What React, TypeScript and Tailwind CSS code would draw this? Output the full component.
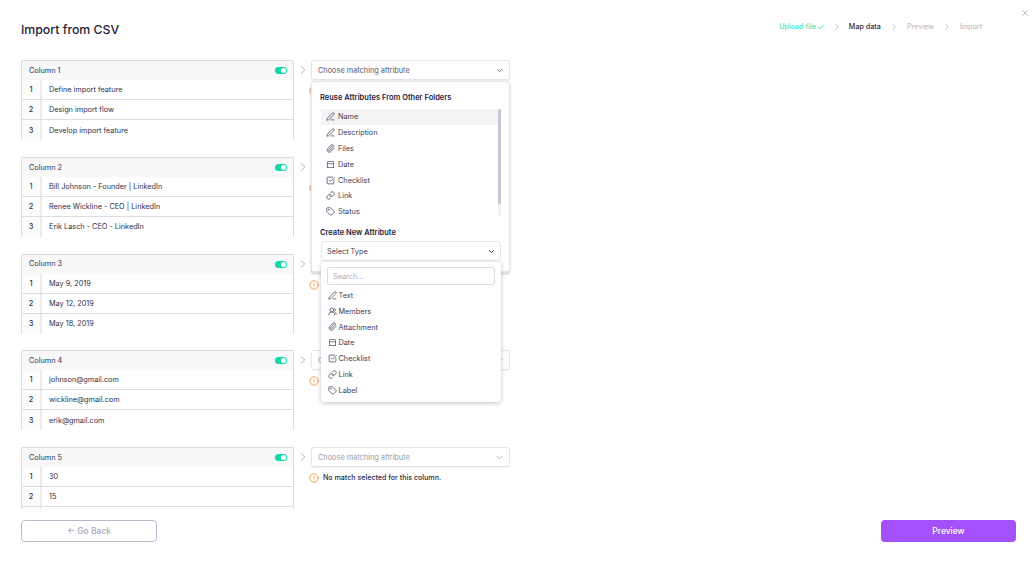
import { Check, ChevronDown, ChevronRight, CircleAlert, Link, Paperclip, PenLine, SquareCheckBig, Tag, UsersRound, X } from "lucide-react";

const columns = [
  { name: "Column 1", rows: ["Define import feature", "Design import flow", "Develop import feature"] },
  { name: "Column 2", rows: ["Bill Johnson - Founder | LinkedIn", "Renee Wickline - CEO | LinkedIn", "Erik Lasch - CEO - LinkedIn"] },
  { name: "Column 3", rows: ["May 9, 2019", "May 12, 2019", "May 18, 2019"] },
  { name: "Column 4", rows: ["johnson@gmail.com", "wickline@gmail.com", "erik@gmail.com"] },
  { name: "Column 5", rows: ["30", "15", ""] },
];

function DateIcon({ size, className }: { size: number; strokeWidth?: number; className?: string }) {
  return (
    <svg width={size} height={size} viewBox="0 0 24 24" fill="none" stroke="currentColor" strokeWidth="1.800" strokeLinecap="round" className={className}>
      <path d="M4 20V5.500A1.500 1.500 0 0 1 5.500 4h13A1.500 1.500 0 0 1 20 5.500V20" />
      <path d="M4 10h16" />
      <path d="M4 20h16" />
    </svg>
  );
}

const reuseItems = [
  { label: "Name", icon: PenLine },
  { label: "Description", icon: PenLine },
  { label: "Files", icon: Paperclip },
  { label: "Date", icon: DateIcon },
  { label: "Checklist", icon: SquareCheckBig },
  { label: "Link", icon: Link },
  { label: "Status", icon: Tag },
];

const typeItems = [
  { label: "Text", icon: PenLine },
  { label: "Members", icon: UsersRound },
  { label: "Attachment", icon: Paperclip },
  { label: "Date", icon: DateIcon },
  { label: "Checklist", icon: SquareCheckBig },
  { label: "Link", icon: Link },
  { label: "Label", icon: Tag },
];

function AttributeMenu() {
  return (
    <div className="absolute left-0 top-[21px] z-10 h-[191px] w-[199px] rounded-[3px] border border-[#e6e6ea] bg-white px-[9px] pt-[11px] shadow-[0_1px_3px_rgba(30,30,60,0.18)]">
      <p className="-ml-px text-[7.5px] font-semibold leading-[10px] text-[#23233f]">Reuse Attributes From Other Folders</p>
      <div className="relative mt-[6px] h-[107px] w-[180px] overflow-hidden">
        {reuseItems.map((item, i) => (
          <div key={item.label} className={`flex h-[15.8px] items-center gap-[3px] pl-[5px] text-[7.3px] text-[#3b3b55] ${i === 0 ? "bg-[#f4f4f5]" : ""}`}>
            <item.icon size={9} strokeWidth={2} className="text-[#44445c]" />
            <span className="pt-[2px]">{item.label}</span>
          </div>
        ))}
        <div className="absolute right-0 top-0 h-full w-[3px] rounded-sm bg-[#f0f0f3]">
          <div className="h-[95px] w-[3px] rounded-sm bg-[#c5c6d4]" />
        </div>
      </div>
      <p className="-ml-px mt-[12px] text-[7.5px] font-semibold leading-[10px] text-[#23233f]">Create New Attribute</p>
      <div className="mt-[3px] flex h-[20px] w-[180px] items-center justify-between rounded-[3px] border border-[#e6e6ea] pl-[5px] pr-[4px] text-[7.3px] text-[#3b3b55]">
        <span className="pt-[2px]">Select Type</span>
        <ChevronDown size={9} strokeWidth={2.500} className="text-[#23233f]" />
      </div>
      <div className="absolute left-[9px] top-[180px] z-20 h-[140px] w-[180px] rounded-[3px] bg-white px-[6px] pt-[5px] shadow-[0_1px_4px_rgba(30,30,60,0.28)]">
        <div className="flex h-[18px] w-[168px] items-center rounded-[3px] border border-[#dcdce4] pl-[5px] text-[7.3px] text-[#a9a9b8]">
          <span className="pt-[2px]">Search...</span>
        </div>
        <div className="mt-[2.500px]">
          {typeItems.map((item) => (
            <div key={item.label} className="flex h-[15.8px] items-center gap-[2px] pl-[0.500px] text-[7.3px] text-[#3b3b55]">
              <item.icon size={9} strokeWidth={2} className="text-[#44445c]" />
              <span className="pt-[2px]">{item.label}</span>
            </div>
          ))}
        </div>
      </div>
    </div>
  );
}

function Warning() {
  return (
    <div className="-ml-[2px] mt-[5px] flex items-center gap-[4px] text-[7.1px] font-medium leading-[12px] text-[#2c2c48]">
      <CircleAlert size={10} strokeWidth={2} className="text-[#f28c28]" />
      No match selected for this column.
    </div>
  );
}

function ColumnRow({ name, rows, open }: { name: string; rows: string[]; open: boolean }) {
  return (
    <div className="flex items-start">
      <div className="h-[80px] w-[273px] shrink-0 overflow-hidden rounded-t-[2px] border-x border-t border-[#dcdce0]">
        <div className="flex h-[19px] items-center justify-between bg-[#f8f8f8] pl-[7px] pr-[6px] text-[7.3px] text-[#33334d]">
          <span className="pt-[1.500px]">{name}</span>
          <div className="flex h-[7px] w-[12px] items-center justify-end rounded-full bg-[#0fd9a8] pr-px">
            <div className="h-[5px] w-[5px] rounded-full bg-white" />
          </div>
        </div>
        {rows.map((row, i) => (
          <div key={i} className={`flex h-[20px] text-[7.3px] text-[#2f2f4a] ${i < 2 ? "border-b border-[#dedee2]" : ""}`}>
            <div className="flex w-[20px] shrink-0 items-center justify-center border-r-2 border-[#ececee] bg-[#fcfcfc] pt-[2px] font-medium">{i + 1}</div>
            <div className="flex items-center pl-[7px] pt-[2px]">{row}</div>
          </div>
        ))}
      </div>
      <div className="flex h-[20px] w-[17px] shrink-0 items-center justify-center">
        <ChevronRight size={14} strokeWidth={1.200} className="text-[#8c8c98]" />
      </div>
      <div className="relative w-[199px]">
        <div className={`flex h-[20px] items-center justify-between rounded-[3px] border border-[#e4e4e8] pl-[6px] pr-[5px] pt-px text-[7.35px] shadow-[0_1px_1px_rgba(30,30,60,0.05)] ${open ? "text-[#55556a]" : "text-[#9a9aa8]"}`}>
          Choose matching attribute
          <ChevronDown size={9} strokeWidth={1.800} className={open ? "text-[#44445c]" : "text-[#9a9aa8]"} />
        </div>
        <Warning />
        {open && <AttributeMenu />}
      </div>
    </div>
  );
}

export default function App() {
  return (
    <div className="flex h-[562px] w-[1035px] flex-col overflow-hidden bg-white pl-[21px] pr-[19px] font-['Inter',sans-serif]">
      <div className="relative flex h-[60px] shrink-0 items-start justify-between">
        <h1 className="pt-[21px] text-[12.3px] font-medium leading-[18px] text-[#1e1e38]">Import from CSV</h1>
        <div className="mr-[34px] mt-[22px] flex items-center text-[7.2px] leading-[10px]">
          <span className="flex items-center gap-[1px] text-[#1fe3b0]">
            Upload file
            <Check size={8} strokeWidth={3} />
          </span>
          <ChevronRight size={10} strokeWidth={1.500} className="mx-[7px] text-[#a0a0ac]" />
          <span className="font-medium text-[#2c2c48]">Map data</span>
          <ChevronRight size={10} strokeWidth={1.500} className="mx-[8px] text-[#a0a0ac]" />
          <span className="text-[#b3b3bf]">Preview</span>
          <ChevronRight size={10} strokeWidth={1.500} className="mx-[8px] text-[#a0a0ac]" />
          <span className="text-[#b3b3bf]">Import</span>
        </div>
        <X size={10} strokeWidth={1.500} className="absolute right-[-13.500px] top-[7.500px] text-[#9a9aa6]" />
      </div>

      <div className="flex h-[449px] shrink-0 flex-col gap-[16.75px] overflow-hidden">
        {columns.map((col, i) => (
          <ColumnRow key={col.name} name={col.name} rows={col.rows} open={i === 0} />
        ))}
      </div>

      <div className="mt-[11px] flex items-start justify-between">
        <button className="flex h-[22px] w-[136px] items-center justify-center rounded-[4px] border border-[#b9b9c9] text-[8.5px] font-medium text-[#a9a9b8]">← Go Back</button>
        <button className="flex h-[22px] w-[135px] items-center justify-center rounded-[4px] bg-[#a450fb] text-[8.5px] font-medium text-white">Preview</button>
      </div>
    </div>
  );
}
